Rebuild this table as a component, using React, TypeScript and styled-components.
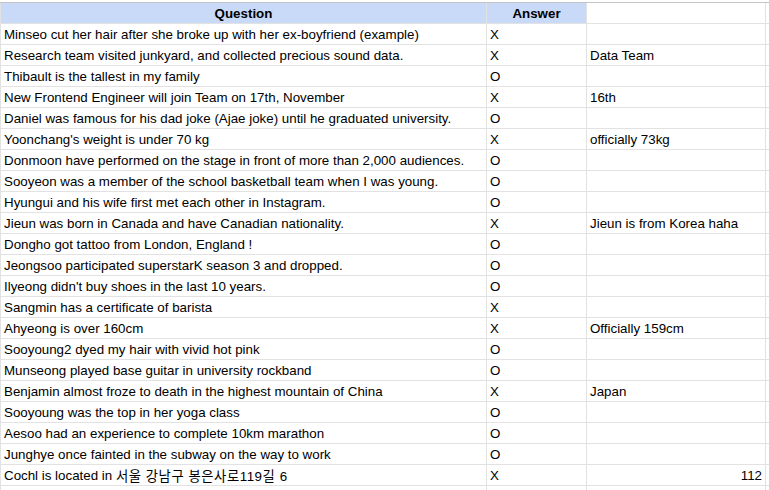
import React from "react";
import styled, { createGlobalStyle } from "styled-components";

const Global = createGlobalStyle`
  html, body { margin: 0; padding: 0; background: #ffffff; }
  body { font-family: "Liberation Sans", Arial, "Noto Sans CJK KR", sans-serif; }
`;

const Sheet = styled.div`
  padding-top: 2px;
  width: 769px;
  height: 490px;
  overflow: hidden;
  box-sizing: border-box;
`;

const Grid = styled.div`
  display: grid;
  grid-template-columns: 487px 100px 179px 1fr;
  grid-auto-rows: 21px;
  border-top: 1px solid #c4c4c4;
`;

type CellProps = { $header?: boolean; $align?: "left" | "center" | "right"; $first?: boolean };

const Cell = styled.div<CellProps>`
  box-sizing: border-box;
  border-right: 1px solid #e2e2e2;
  border-bottom: 1px solid #e2e2e2;
  ${(p) => (p.$first ? "border-left: 1px solid #e2e2e2;" : "")}
  background: ${(p) => (p.$header ? "#c9daf8" : "#ffffff")};
  font-family: "Liberation Sans", Arial, "Noto Sans CJK KR", sans-serif;
  font-size: 13.33px;
  font-weight: ${(p) => (p.$header ? 700 : 400)};
  color: #000000;
  display: flex;
  align-items: center;
  justify-content: ${(p) =>
    p.$align === "center" ? "center" : p.$align === "right" ? "flex-end" : "flex-start"};
  padding: 0 3px;
  white-space: nowrap;
  overflow: hidden;
`;

const Hangul = styled.span`
  font-family: "Liberation Sans", Arial, "Noto Sans CJK KR", sans-serif;
  letter-spacing: 0.55px;
  white-space: pre;
`;

const rows: [React.ReactNode, string, string, boolean?][] = [
  ["Minseo cut her hair after she broke up with her ex-boyfriend (example)", "X", ""],
  ["Research team visited junkyard, and collected precious sound data.", "X", "Data Team"],
  ["Thibault is the tallest in my family", "O", ""],
  ["New Frontend Engineer will join Team on 17th, November", "X", "16th"],
  ["Daniel was famous for his dad joke (Ajae joke) until he graduated university.", "O", ""],
  ["Yoonchang's weight is under 70 kg", "X", "officially 73kg"],
  ["Donmoon have performed on the stage in front of more than 2,000 audiences.", "O", ""],
  ["Sooyeon was a member of the school basketball team when I was young.", "O", ""],
  ["Hyungui and his wife first met each other in Instagram.", "O", ""],
  ["Jieun was born in Canada and have Canadian nationality.", "X", "Jieun is from Korea haha"],
  ["Dongho got tattoo from London, England !", "O", ""],
  ["Jeongsoo participated superstarK season 3 and dropped.", "O", ""],
  ["Ilyeong didn't buy shoes in the last 10 years.", "O", ""],
  ["Sangmin has a certificate of barista", "X", ""],
  ["Ahyeong is over 160cm", "X", "Officially 159cm"],
  ["Sooyoung2 dyed my hair with vivid hot pink", "O", ""],
  ["Munseong played base guitar in university rockband", "O", ""],
  ["Benjamin almost froze to death in the highest mountain of China", "X", "Japan"],
  ["Sooyoung was the top in her yoga class", "O", ""],
  ["Aesoo had an experience to complete 10km marathon", "O", ""],
  ["Junghye once fainted in the subway on the way to work", "O", ""],
  [
    <>
      {"Cochl is located in\u00a0"}
      <Hangul>서울 강남구 봉은사로119길 6</Hangul>
    </>,
    "X",
    "112",
    true,
  ],
];

export default function App() {
  return (
    <>
      <Global />
      <Sheet>
        <Grid>
          <Cell $header $first $align="center">Question</Cell>
          <Cell $header $align="center">Answer</Cell>
          <Cell />
          <Cell />
          {rows.map(([q, a, n, right], i) => (
            <React.Fragment key={i}>
              <Cell $first>{q}</Cell>
              <Cell>{a}</Cell>
              <Cell $align={right ? "right" : "left"}>{n}</Cell>
              <Cell />
            </React.Fragment>
          ))}
          <Cell $first />
          <Cell />
          <Cell />
          <Cell />
        </Grid>
      </Sheet>
    </>
  );
}
